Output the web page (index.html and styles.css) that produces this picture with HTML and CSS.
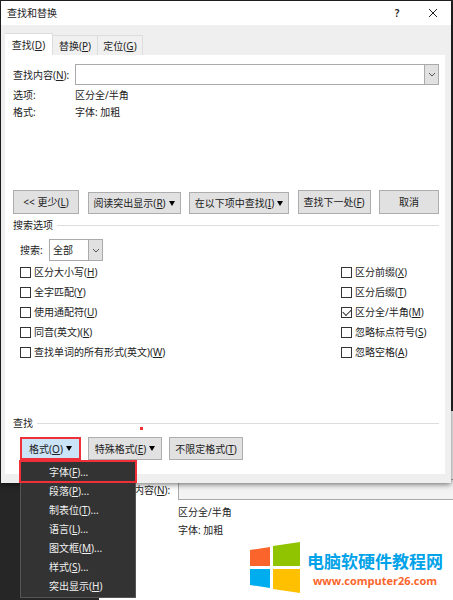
FILE: index.html
```
<!DOCTYPE html>
<html lang="zh-CN">

<head>
    <meta charset="UTF-8">
    <meta name="viewport" content="width=device-width, initial-scale=1.0">
    <title>查找和替换</title>
    <link rel="stylesheet" href="styles.css">
</head>

<body>
    <!-- 后面的窗口 -->
    <section class="back-window">
        <div class="back-row">
            <label for="backFind">查找内容(<u>N</u>):</label>
            <input type="text" id="backFind" class="back-input">
        </div>
        <p>区分全/半角</p>
        <p>字体: 加粗</p>
    </section>

    <main class="dialog">
        <header class="title-bar">
            <h1>查找和替换</h1>
            <button class="title-btn" aria-label="帮助">?</button>
            <button class="title-btn" aria-label="关闭">
                <svg width="10" height="10" viewBox="0 0 10 10"><path d="M1 1L9 9M9 1L1 9" stroke="#222" fill="none"/></svg>
            </button>
        </header>

        <nav class="tabs">
            <button class="tab active">查找(<u>D</u>)</button>
            <button class="tab">替换(<u>P</u>)</button>
            <button class="tab">定位(<u>G</u>)</button>
        </nav>

        <div class="panel">
            <div class="find-grid">
                <label for="findInput">查找内容(<u>N</u>):</label>
                <div class="combo">
                    <input type="text" id="findInput">
                    <button class="combo-btn" aria-label="展开">
                        <svg width="8" height="5" viewBox="0 0 8 5"><path d="M1 1L4 4L7 1" stroke="#555" fill="none"/></svg>
                    </button>
                </div>
                <span>选项:</span>
                <span>区分全/半角</span>
                <span>格式:</span>
                <span>字体: 加粗</span>
            </div>

            <div class="actions">
                <button class="btn less">&lt;&lt; 更少(<u>L</u>)</button>
                <button class="btn short reading">阅读突出显示(<u>R</u>)<i class="arrow"></i></button>
                <button class="btn short find-in">在以下项中查找(<u>I</u>)<i class="arrow"></i></button>
                <button class="btn next">查找下一处(<u>F</u>)</button>
                <button class="btn cancel">取消</button>
            </div>

            <h2 class="group-title">搜索选项</h2>
            <div class="search-row">
                <label for="direction">搜索:</label>
                <div class="select-box">
                    <select id="direction">
                        <option>全部</option>
                        <option>向下</option>
                        <option>向上</option>
                    </select>
                    <span class="select-arrow">
                        <svg width="8" height="5" viewBox="0 0 8 5"><path d="M1 1L4 4L7 1" stroke="#555" fill="none"/></svg>
                    </span>
                </div>
            </div>

            <div class="options">
                <div class="option-col">
                    <label><input type="checkbox">区分大小写(<u>H</u>)</label>
                    <label><input type="checkbox">全字匹配(<u>Y</u>)</label>
                    <label><input type="checkbox">使用通配符(<u>U</u>)</label>
                    <label><input type="checkbox">同音(英文)(<u>K</u>)</label>
                    <label><input type="checkbox">查找单词的所有形式(英文)(<u>W</u>)</label>
                </div>
                <div class="option-col right">
                    <label><input type="checkbox">区分前缀(<u>X</u>)</label>
                    <label><input type="checkbox">区分后缀(<u>T</u>)</label>
                    <label><input type="checkbox" checked>区分全/半角(<u>M</u>)</label>
                    <label><input type="checkbox">忽略标点符号(<u>S</u>)</label>
                    <label><input type="checkbox">忽略空格(<u>A</u>)</label>
                </div>
            </div>

            <h2 class="group-title find-title">查找<span class="dot"></span></h2>
            <div class="format-row">
                <div class="menu-wrap">
                    <button class="btn format">格式(<u>O</u>)<i class="arrow"></i></button>
                    <div class="menu">
                        <button class="marked">字体(<u>F</u>)...</button>
                        <button>段落(<u>P</u>)...</button>
                        <button>制表位(<u>T</u>)...</button>
                        <button>语言(<u>L</u>)...</button>
                        <button>图文框(<u>M</u>)...</button>
                        <button>样式(<u>S</u>)...</button>
                        <button>突出显示(<u>H</u>)</button>
                    </div>
                </div>
                <button class="btn special">特殊格式(<u>E</u>)<i class="arrow"></i></button>
                <button class="btn special">不限定格式(<u>T</u>)</button>
            </div>
        </div>
    </main>

    <!-- 网站标志 -->
    <a class="brand" href="#">
        <svg width="50" height="51" viewBox="0 0 50 51">
            <path d="M0 8L20 5V24H0Z" fill="#fb652b"/>
            <path d="M23 4L50 0V24H23Z" fill="#90c300"/>
            <path d="M0 27H20V46L0 43Z" fill="#00adef"/>
            <path d="M23 27H50V51L23 47Z" fill="#ffc000"/>
        </svg>
        <span class="brand-text">
            <strong>电脑软硬件教程网</strong>
            <span>www.computer26.com</span>
        </span>
    </a>
</body>

</html>
```
FILE: styles.css
```
* {
    margin: 0;
    padding: 0;
    box-sizing: border-box;
}

body {
    position: relative;
    min-height: 100vh;
    padding: 1px 2px 0 1px;
    overflow: hidden;
    background: #262626;
    color: #222;
    font-family: "Noto Sans", "Noto Sans CJK SC", sans-serif;
    font-size: 10px;
    line-height: 14px;
}

button,
input,
select {
    font: inherit;
    color: inherit;
    border: none;
    border-radius: 0;
    background: none;
}

/* 后面的窗口 */
.back-window {
    position: absolute;
    left: 99px;
    right: 0;
    top: 411px;
    bottom: 0;
    padding: 68px 0 0 79px;
    background: #fff;
}

.back-row {
    display: flex;
    align-items: center;
    margin: 0 0 5px -64px;
}

.back-row label {
    width: 64px;
    flex: none;
}

.back-input {
    flex: 1;
    min-width: 0;
    height: 21px;
    border: 1px solid #aaa;
    border-right: none;
    background: #f3f3f3;
}

.back-window p {
    margin-bottom: 4px;
}

/* 对话框 */
.dialog {
    position: relative;
    padding-bottom: 9px;
    background: #efefef;
    box-shadow: 0 1px 6px rgba(0, 0, 0, 0.6);
}

.title-bar {
    display: flex;
    align-items: center;
    height: 24px;
    padding: 0 12px 0 6px;
    background: #fff;
}

.title-bar h1 {
    flex: 1;
    font-size: 10px;
    font-weight: normal;
}

.title-btn {
    display: flex;
    align-items: center;
    justify-content: center;
    width: 12px;
    height: 20px;
    margin-left: 24px;
    font-weight: 600;
}

.tabs {
    display: flex;
    align-items: flex-end;
    height: 30px;
    padding-left: 4px;
}

.tab {
    width: 45px;
    height: 20px;
    border: 1px solid #ddd;
    border-left: none;
    border-bottom: none;
    background: #f0f0f0;
}

.tab.active {
    width: 48px;
    height: 22px;
    background: #fff;
}

.panel {
    margin: 0 6px 0 4px;
    padding: 9px 6px 14px 8px;
    background: #fff;
}

.find-grid {
    display: grid;
    grid-template-columns: 62px 1fr;
    align-items: center;
    row-gap: 3px;
}

.combo {
    display: flex;
    height: 21px;
    border: 1px solid #aaa;
}

.combo input {
    flex: 1;
    min-width: 0;
    padding: 0 4px;
}

.combo-btn,
.select-arrow {
    display: flex;
    align-items: center;
    justify-content: center;
    width: 14px;
    border-left: 1px solid #aaa;
    background: #e1e1e1;
}

.actions {
    display: flex;
    justify-content: space-between;
    align-items: flex-end;
    margin-top: 71px;
}

.btn {
    display: flex;
    align-items: center;
    justify-content: center;
    height: 24px;
    border: 1px solid #adadad;
    background: #e1e1e1;
    white-space: nowrap;
}

.btn.short {
    height: 22px;
}

.less {
    width: 66px;
}

.reading {
    width: 93px;
}

.find-in {
    width: 100px;
}

.next {
    width: 73px;
}

.cancel {
    width: 60px;
}

.arrow {
    margin-left: 3px;
    border: 3px solid transparent;
    border-top: 5px solid #000;
    border-bottom: none;
}

.group-title {
    display: flex;
    align-items: center;
    gap: 4px;
    margin-top: 4px;
    font-size: 10px;
    font-weight: normal;
}

.group-title::after {
    content: "";
    flex: 1;
    border-top: 1px solid #ddd;
}

.search-row {
    display: flex;
    align-items: center;
    margin: 7px 0 1px 7px;
}

.search-row label {
    width: 29px;
}

.select-box {
    position: relative;
    width: 54px;
    height: 22px;
}

.select-box select {
    width: 100%;
    height: 100%;
    padding: 0 16px 0 3px;
    border: 1px solid #aaa;
    appearance: none;
}

.select-arrow {
    position: absolute;
    top: 1px;
    right: 1px;
    bottom: 1px;
    pointer-events: none;
}

/* 复选框 */
.options {
    display: flex;
    justify-content: space-between;
    padding-left: 7px;
}

.option-col label {
    display: flex;
    align-items: center;
    height: 20px;
}

.option-col.right {
    width: 98px;
    white-space: nowrap;
}

.option-col input {
    flex: none;
    width: 11px;
    height: 11px;
    margin-right: 3px;
    border: 1px solid #333;
    background: #fff;
    appearance: none;
}

.option-col input:checked::after {
    content: "";
    display: block;
    width: 7px;
    height: 4px;
    margin: 1px;
    border: solid #333;
    border-width: 0 0 1px 1px;
    transform: rotate(-45deg);
}

.find-title {
    position: relative;
    margin-top: 54px;
}

.dot {
    position: absolute;
    left: 127px;
    top: 11px;
    width: 3px;
    height: 3px;
    background: #f03030;
}

.format-row {
    display: flex;
    gap: 7px;
    margin: 7px 0 0 7px;
}

.format-row .btn {
    height: 23px;
}

.menu-wrap {
    position: relative;
}

.format {
    width: 61px;
    border: 1px solid #0a64ad;
    background: #cce4f7;
    outline: 2px solid #f03038;
    outline-offset: -2px;
}

.special {
    width: 74px;
}

/* 格式菜单 */
.menu {
    position: absolute;
    z-index: 5;
    left: 0;
    top: 100%;
    width: 116px;
    padding: 2px 0;
    background: #333;
    border: 1px solid #555;
    border-top: none;
    color: #f0f0f0;
}

.menu button {
    display: block;
    width: 100%;
    height: 19px;
    padding-left: 28px;
    text-align: left;
}

.menu .marked {
    outline: 2px solid #f03038;
}

/* 网站标志 */
.brand {
    position: absolute;
    right: 10px;
    bottom: 7px;
    display: flex;
    align-items: center;
    gap: 7px;
    text-decoration: none;
}

.brand-text {
    display: flex;
    flex-direction: column;
    align-items: center;
    color: #fb652b;
    font-family: "Open Sans", sans-serif;
    font-size: 11px;
    font-weight: bold;
    line-height: 14px;
}

.brand-text strong {
    color: #00a2e8;
    font-family: "Noto Sans CJK SC", sans-serif;
    font-size: 17px;
    font-weight: bold;
    line-height: 26px;
}
```
